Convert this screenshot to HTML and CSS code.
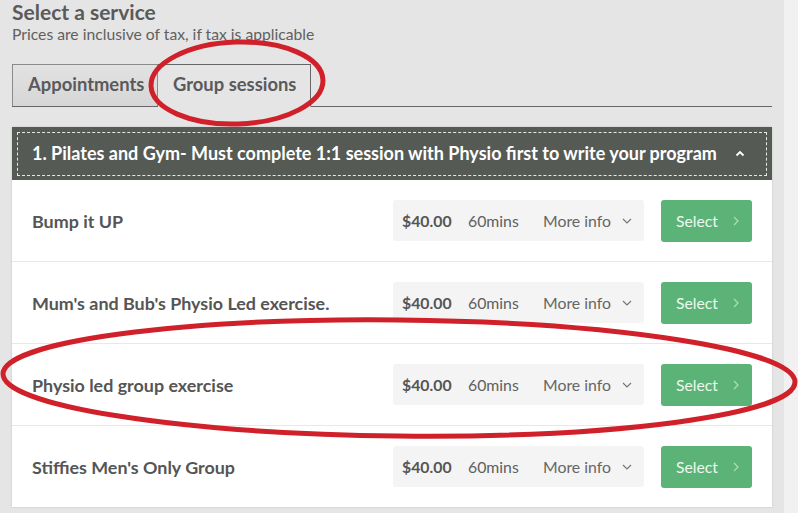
FILE: index.html
```html
<!DOCTYPE html>
<html>
<head>
<meta charset="utf-8">
<link rel="stylesheet" href="styles.css">
</head>
<body>
<div class="page">
  <main class="main">
    <h1 class="title">Select a service</h1>
    <p class="subtitle">Prices are inclusive of tax, if tax is applicable</p>
    <div class="tabs">
      <div class="tab tab-inactive">Appointments</div>
      <div class="tab tab-active">Group sessions</div>
    </div>
    <section class="panel">
      <div class="panel-head">
        <div class="panel-head-inner">
          <span>1. Pilates and Gym- Must complete 1:1 session with Physio first to write your program</span>
          <svg class="caret-up" width="10" height="7" viewBox="0 0 10 7"><path d="M1.5 5.5 L5 2 L8.5 5.5" fill="none" stroke="#fff" stroke-width="1.8"/></svg>
        </div>
      </div>
      <div class="row">
        <div class="name">Bump it UP</div>
        <div class="pill"><span class="price">$40.00</span><span class="dur">60mins</span><span class="more">More info <svg width="10" height="6" viewBox="0 0 10 6"><path d="M1 1 L5 5 L9 1" fill="none" stroke="#777" stroke-width="1.2"/></svg></span></div>
        <button class="select">Select <svg width="6" height="10" viewBox="0 0 6 10"><path d="M1 1 L5 5 L1 9" fill="none" stroke="#a9dcb8" stroke-width="1.3"/></svg></button>
      </div>
      <div class="row">
        <div class="name">Mum's and Bub's Physio Led exercise.</div>
        <div class="pill"><span class="price">$40.00</span><span class="dur">60mins</span><span class="more">More info <svg width="10" height="6" viewBox="0 0 10 6"><path d="M1 1 L5 5 L9 1" fill="none" stroke="#777" stroke-width="1.2"/></svg></span></div>
        <button class="select">Select <svg width="6" height="10" viewBox="0 0 6 10"><path d="M1 1 L5 5 L1 9" fill="none" stroke="#a9dcb8" stroke-width="1.3"/></svg></button>
      </div>
      <div class="row">
        <div class="name">Physio led group exercise</div>
        <div class="pill"><span class="price">$40.00</span><span class="dur">60mins</span><span class="more">More info <svg width="10" height="6" viewBox="0 0 10 6"><path d="M1 1 L5 5 L9 1" fill="none" stroke="#777" stroke-width="1.2"/></svg></span></div>
        <button class="select">Select <svg width="6" height="10" viewBox="0 0 6 10"><path d="M1 1 L5 5 L1 9" fill="none" stroke="#a9dcb8" stroke-width="1.3"/></svg></button>
      </div>
      <div class="row row-last">
        <div class="name">Stiffies Men's Only Group</div>
        <div class="pill"><span class="price">$40.00</span><span class="dur">60mins</span><span class="more">More info <svg width="10" height="6" viewBox="0 0 10 6"><path d="M1 1 L5 5 L9 1" fill="none" stroke="#777" stroke-width="1.2"/></svg></span></div>
        <button class="select">Select <svg width="6" height="10" viewBox="0 0 6 10"><path d="M1 1 L5 5 L1 9" fill="none" stroke="#a9dcb8" stroke-width="1.3"/></svg></button>
      </div>
    </section>
  </main>
  <div class="strip"></div>
  <svg class="annot" width="798" height="513" viewBox="0 0 798 513">
    <ellipse cx="237" cy="83" rx="86" ry="41" fill="none" stroke="#d0202a" stroke-width="5" transform="rotate(-2 237 83)"/>
    <ellipse cx="399" cy="378" rx="396" ry="58" fill="none" stroke="#d0202a" stroke-width="5" transform="rotate(0.6 399 378)"/>
  </svg>
</div>
</body>
</html>
```
FILE: styles.css
```css
* { box-sizing: border-box; }
html, body { margin: 0; padding: 0; }
body {
  font-family: Lato, "Open Sans", "Liberation Sans", sans-serif;
  color: #555;
  background: #e5e5e5;
  width: 798px;
  height: 513px;
  overflow: hidden;
}
.page {
  position: relative;
  display: flex;
  height: 513px;
}
.main {
  width: 784px;
  padding: 0 12px;
  background: #e5e5e5;
}
.strip {
  width: 14px;
  background: #f1f1f1;
}
.title {
  margin: 0;
  font-size: 21px;
  line-height: 24px;
  font-weight: 700;
  color: #5a5a5a;
}
.subtitle {
  margin: 0;
  font-size: 15.7px;
  line-height: 20px;
  color: #606060;
}
.tabs {
  display: flex;
  margin-top: 20px;
  width: 760px;
  border-bottom: 1px solid #666;
}
.tab {
  height: 42px;
  display: flex;
  align-items: center;
  padding-bottom: 3px;
  font-size: 18.4px;
  font-weight: 700;
  color: #5a5a5a;
}
.tab-inactive {
  width: 146px;
  padding-left: 15px;
  border: 1px solid #8a8a8a;
  border-bottom: none;
  background: linear-gradient(#e2e2e2, #d6d6d6);
}
.tab-active {
  width: 153px;
  padding-left: 15px;
  border: 1px solid #666;
  border-left: none;
  border-bottom: 1px solid #e5e5e5;
  margin-bottom: -1px;
  height: 43px;
  background: #e5e5e5;
}
.panel {
  margin-top: 20px;
  width: 760px;
  background: #fff;
  box-shadow: 0 0 2px rgba(0,0,0,0.15);
}
.panel-head {
  background: #555a55;
  padding: 5px 5px 4px;
  height: 53px;
}
.panel-head-inner {
  height: 44px;
  border: 1px dashed #e8e8e8;
  display: flex;
  align-items: center;
  justify-content: space-between;
  padding: 0 21px 2px 14px;
  color: #fff;
  font-size: 18px;
  font-weight: 700;
}
.caret-up { display: block; }
.row {
  display: flex;
  align-items: center;
  height: 82px;
  padding: 0 20px;
  border-bottom: 1px solid #e8e8e8;
}
.row:first-of-type { height: 83px; }
.row-last { border-bottom: none; height: 81px; }
.name {
  flex: 1;
  font-size: 17.9px;
  font-weight: 700;
  color: #555;
}
.pill {
  width: 251px;
  height: 41px;
  background: #f4f4f4;
  border-radius: 3px;
  display: flex;
  align-items: center;
  font-size: 15.8px;
  padding-left: 9px;
}
.price {
  font-weight: 700;
  color: #555;
  width: 66px;
}
.dur {
  color: #5f5f5f;
  width: 75px;
}
.more {
  color: #666;
  display: flex;
  align-items: center;
  gap: 11px;
}
.select {
  margin-left: 17px;
  width: 91px;
  height: 42px;
  border: none;
  border-radius: 3px;
  background: #5cb377;
  color: #eef8f0;
  font-family: inherit;
  font-size: 15.7px;
  display: flex;
  align-items: center;
  padding: 0 0 0 15px;
  gap: 15px;
}
.annot {
  position: absolute;
  left: 0;
  top: 0;
  pointer-events: none;
}
```
